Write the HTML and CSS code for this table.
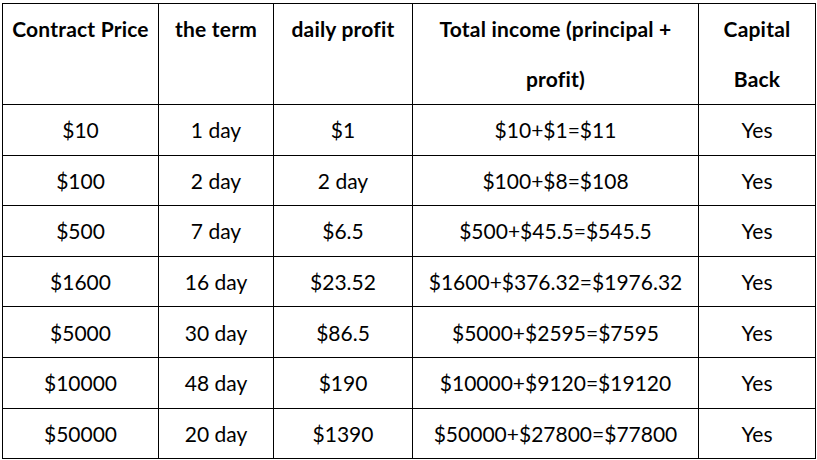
FILE: index.html
```html
<!DOCTYPE html>
<html>
<head>
<meta charset="utf-8">
<link rel="stylesheet" href="styles.css">
</head>
<body>
<table class="plan">
  <colgroup>
    <col class="c1"><col class="c2"><col class="c3"><col class="c4"><col class="c5">
  </colgroup>
  <thead>
    <tr class="head">
      <th>Contract Price</th>
      <th>the term</th>
      <th>daily profit</th>
      <th>Total income (principal +<br>profit)</th>
      <th>Capital<br>Back</th>
    </tr>
  </thead>
  <tbody>
    <tr><td>$10</td><td>1 day</td><td>$1</td><td>$10+$1=$11</td><td>Yes</td></tr>
    <tr><td>$100</td><td>2 day</td><td>2 day</td><td>$100+$8=$108</td><td>Yes</td></tr>
    <tr><td>$500</td><td>7 day</td><td>$6.5</td><td>$500+$45.5=$545.5</td><td>Yes</td></tr>
    <tr><td>$1600</td><td>16 day</td><td>$23.52</td><td>$1600+$376.32=$1976.32</td><td>Yes</td></tr>
    <tr><td>$5000</td><td>30 day</td><td>$86.5</td><td>$5000+$2595=$7595</td><td>Yes</td></tr>
    <tr><td>$10000</td><td>48 day</td><td>$190</td><td>$10000+$9120=$19120</td><td>Yes</td></tr>
    <tr><td>$50000</td><td>20 day</td><td>$1390</td><td>$50000+$27800=$77800</td><td>Yes</td></tr>
  </tbody>
</table>
</body>
</html>
```
FILE: styles.css
```css
html, body {
  margin: 0;
  padding: 0;
  background: #fff;
}
.plan {
  margin: 3px 0 0 2px;
  border-collapse: collapse;
  table-layout: fixed;
  width: 813px;
  font-family: Lato, "Open Sans", sans-serif;
  font-size: 21px;
  color: #000;
}
.c1 { width: 156px; }
.c2 { width: 115px; }
.c3 { width: 139px; }
.c4 { width: 286px; }
.c5 { width: 117px; }
.plan th, .plan td {
  border: 1px solid #000;
  padding: 0;
  text-align: center;
  white-space: nowrap;
}
.plan th {
  font-weight: bold;
  vertical-align: top;
  height: 100px;
  line-height: 50px;
  letter-spacing: 0.2px;
}
.plan td {
  vertical-align: middle;
  height: 49.6px;
  line-height: 49px;
}
```
